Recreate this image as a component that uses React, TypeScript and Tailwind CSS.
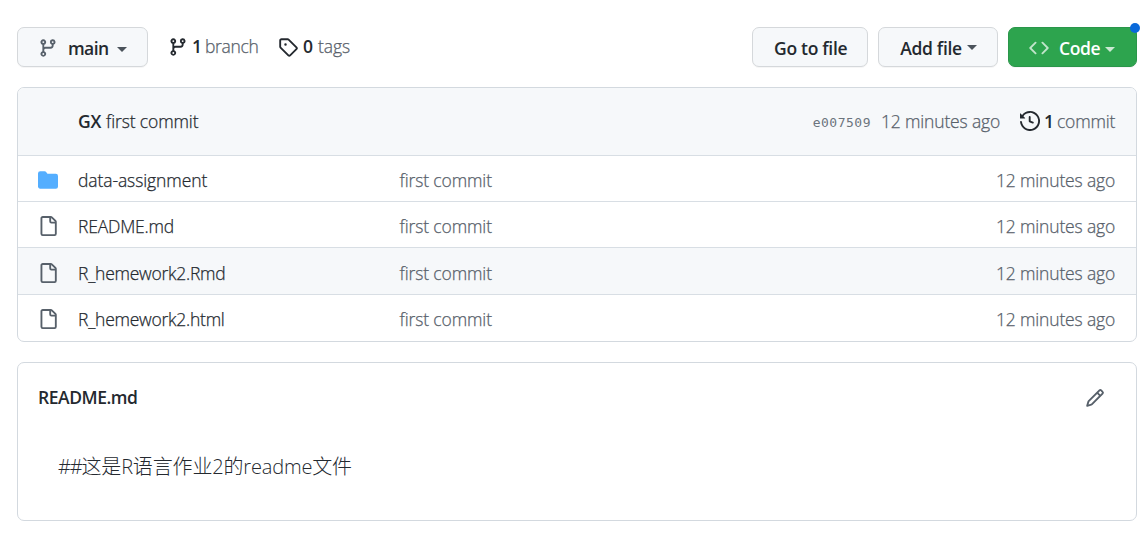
import type { ReactNode } from 'react';

const paths = {
  branch:
    'M11.75 2.5a.75.75 0 100 1.5.75.75 0 000-1.5zm-2.25.75a2.25 2.25 0 113 2.122V6A2.5 2.5 0 0110 8.5H6a1 1 0 00-1 1v1.128a2.251 2.251 0 11-1.5 0V5.372a2.25 2.25 0 111.5 0v1.836A2.492 2.492 0 016 7h4a1 1 0 001-1v-.628A2.25 2.25 0 019.5 3.25zM4.25 12a.75.75 0 100 1.5.75.75 0 000-1.5zM3.5 3.25a.75.75 0 111.5 0 .75.75 0 01-1.5 0z',
  tag: 'M2.5 7.775V2.75a.25.25 0 01.25-.25h5.025a.25.25 0 01.177.073l6.25 6.25a.25.25 0 010 .354l-5.025 5.025a.25.25 0 01-.354 0l-6.25-6.25a.25.25 0 01-.073-.177zm-1.5 0V2.75C1 1.784 1.784 1 2.75 1h5.025c.464 0 .91.184 1.238.513l6.25 6.25a1.75 1.75 0 010 2.474l-5.026 5.026a1.75 1.75 0 01-2.474 0l-6.25-6.25A1.75 1.75 0 011 7.775zM6 5a1 1 0 100 2 1 1 0 000-2z',
  code: 'M4.72 3.22a.75.75 0 011.06 1.06L2.06 8l3.72 3.72a.75.75 0 11-1.06 1.06L.47 8.53a.75.75 0 010-1.06l4.25-4.25zm6.56 0a.75.75 0 10-1.06 1.06L13.94 8l-3.72 3.72a.75.75 0 101.06 1.06l4.25-4.25a.75.75 0 000-1.06l-4.25-4.25z',
  history:
    'M1.643 3.143L.427 1.927A.25.25 0 000 2.104V5.75c0 .138.112.25.25.25h3.646a.25.25 0 00.177-.427L2.715 4.215a6.5 6.5 0 11-1.18 4.458.75.75 0 10-1.493.154 8.001 8.001 0 101.6-5.684zM7.75 4a.75.75 0 01.75.75v2.992l2.028.812a.75.75 0 01-.557 1.392l-2.5-1A.75.75 0 017 8.25v-3.5A.75.75 0 017.75 4z',
  folder:
    'M1.75 1A1.75 1.75 0 000 2.75v10.5C0 14.216.784 15 1.75 15h12.5A1.75 1.75 0 0016 13.25v-8.5A1.75 1.75 0 0014.25 3h-6.5a.25.25 0 01-.2-.1l-.9-1.2c-.33-.44-.85-.7-1.4-.7h-3.5z',
  file: 'M2 1.75C2 .784 2.784 0 3.75 0h6.586c.464 0 .909.184 1.237.513l2.914 2.914c.329.328.513.773.513 1.237v9.586A1.75 1.75 0 0113.25 16h-9.5A1.75 1.75 0 012 14.25V1.75zm1.75-.25a.25.25 0 00-.25.25v12.5c0 .138.112.25.25.25h9.5a.25.25 0 00.25-.25V6h-2.75A1.75 1.75 0 019 4.25V1.5H3.75zm6.75.062V4.25c0 .138.112.25.25.25h2.688a.252.252 0 00-.011-.013l-2.914-2.914a.272.272 0 00-.013-.011z',
  pencil:
    'M11.013 1.427a1.75 1.75 0 012.474 0l1.086 1.086a1.75 1.75 0 010 2.474l-8.61 8.61c-.21.21-.47.364-.756.445l-3.251.93a.75.75 0 01-.927-.928l.929-3.25a1.75 1.75 0 01.445-.758l8.61-8.61zm1.414 1.06a.25.25 0 00-.354 0L10.811 3.75l1.439 1.44 1.263-1.263a.25.25 0 000-.354l-1.086-1.086zM11.189 6.25L9.75 4.81l-6.286 6.287a.25.25 0 00-.064.108l-.558 1.953 1.953-.558a.249.249 0 00.108-.064l6.286-6.286z',
};

function Icon({ name, className = '' }: { name: keyof typeof paths; className?: string }) {
  return (
    <svg viewBox="0 0 16 16" fill="currentColor" className={`size-5 shrink-0 ${className}`}>
      <path fillRule="evenodd" d={paths[name]} />
    </svg>
  );
}

function Caret({ className = '' }: { className?: string }) {
  return (
    <svg viewBox="0 0 10 5" fill="currentColor" className={`h-[5px] w-[10px] shrink-0 ${className}`}>
      <path d="M0 0h10L5 5z" />
    </svg>
  );
}

function Button({ className, children }: { className: string; children: ReactNode }) {
  return (
    <button
      className={`flex h-10 items-center rounded-[7px] border font-semibold whitespace-nowrap shadow-[0_1px_0_rgba(27,31,36,0.04)] ${className}`}
    >
      {children}
    </button>
  );
}

/* Light text with a hairline stroke, for a weight between light and regular. */
function Text({ className = '', children }: { className?: string; children: ReactNode }) {
  return <span className={`font-light whitespace-nowrap [-webkit-text-stroke:0.25px] ${className}`}>{children}</span>;
}

const files: { name: string; icon: 'folder' | 'file'; row: string; track: string }[] = [
  { name: 'data-assignment', icon: 'folder', row: 'h-[45px] pt-[3px]', track: 'tracking-[-0.1px]' },
  { name: 'README.md', icon: 'file', row: 'h-[46px] border-t pt-[3px]', track: 'tracking-[-0.2px]' },
  { name: 'R_hemework2.Rmd', icon: 'file', row: 'h-[47px] border-t bg-[#f6f8fa] pt-1', track: 'tracking-[-0.25px]' },
  { name: 'R_hemework2.html', icon: 'file', row: 'h-[47px] border-t pt-0.5', track: 'tracking-[-0.25px]' },
];

export default function App() {
  return (
    <div className="h-[538px] w-[1147px] overflow-hidden bg-white pt-[27px] pr-[10px] pl-[17px] font-['Open_Sans','Noto_Sans_CJK_SC',sans-serif] text-[17.5px] leading-[26px] text-[#24292f]">
      <div className="flex h-10 items-center">
        <Button className="w-[131px] border-[#d5d8db] bg-[#f6f8fa] pl-5">
          <Icon name="branch" className="mt-0.5 text-[#57606a]" />
          <span className="ml-[10px] w-[39px] pt-0.5 tracking-[-0.6px]">main</span>
          <Caret className="mt-[5px] ml-[10px] text-[#4b535b]" />
        </Button>
        <div className="ml-5 flex items-center pb-0.5">
          <Icon name="branch" className="mt-0.5" />
          <span className="ml-1 font-semibold">1</span>
          <Text className="ml-[3px] w-[53px] tracking-[-0.35px] text-[#57606a]">branch</Text>
        </div>
        <div className="ml-5 flex items-center pb-0.5">
          <Icon name="tag" className="mt-0.5" />
          <span className="ml-[5px] font-semibold">0</span>
          <Text className="ml-[5px] tracking-[-0.1px] text-[#57606a]">tags</Text>
        </div>
        <div className="ml-auto flex gap-[10px]">
          <Button className="w-[116px] border-[#d5d8db] bg-[#f6f8fa] pt-0.5 pl-[21px]">
            <span className="tracking-[-0.3px]">Go to file</span>
          </Button>
          <Button className="w-[120px] border-[#d5d8db] bg-[#f6f8fa] pl-[21px]">
            <span className="w-[62px] pt-0.5 tracking-[-0.3px]">Add file</span>
            <Caret className="ml-[5px] text-[#4b535b]" />
          </Button>
          <Button className="relative w-[129px] border-[#2a964a] bg-[#2da44e] pl-5 text-white">
            <Icon name="code" className="mt-0.5 text-[#c0e4ca]" />
            <span className="ml-[10px] w-[41px] pt-0.5 tracking-[-0.35px]">Code</span>
            <Caret className="mt-[5px] ml-[5px] text-[#cbe9d3]" />
            <span className="absolute -top-[5px] -right-1 size-[10px] rounded-full bg-[#0969da]" />
          </Button>
        </div>
      </div>

      <div className="mt-5 overflow-hidden rounded-[7px] border border-[#d3d9df]">
        <div className="flex h-[68px] items-center border-b border-[#d8dee4] bg-[#f6f8fa] pr-[21px] pb-px pl-[60px]">
          <span className="font-semibold tracking-[-0.3px]">GX</span>
          <Text className="ml-[5px] tracking-[-0.12px]">first commit</Text>
          <span className="ml-auto pt-[3px] font-['DejaVu_Sans_Mono',monospace] text-[13px] tracking-[0.5px] text-[#6c747d]">
            e007509
          </span>
          <Text className="ml-[10px] w-[119px] tracking-[-0.17px] text-[#57606a]">12 minutes ago</Text>
          <Icon name="history" className="ml-5" />
          <span className="ml-1 font-semibold">1</span>
          <Text className="ml-[3px] w-[58px] tracking-[-0.2px] text-[#57606a]">commit</Text>
        </div>
        {files.map((f) => (
          <div key={f.name} className={`flex items-center border-[#d8dee4] pr-[21px] pl-5 ${f.row}`}>
            <Icon name={f.icon} className={f.icon === 'folder' ? 'text-[#54aeff]' : 'text-[#57606a]'} />
            <Text className={`ml-5 w-[321.5px] pb-px ${f.track}`}>{f.name}</Text>
            <Text className="pb-px tracking-[-0.12px] text-[#57606a]">first commit</Text>
            <Text className="ml-auto w-[119px] pb-px tracking-[-0.17px] text-[#57606a]">12 minutes ago</Text>
          </div>
        ))}
      </div>

      <div className="mt-5 h-[159px] rounded-[7px] border border-[#d3d9df]">
        <div className="flex h-[69px] items-center justify-between pr-[31px] pl-5">
          <h2 className="pb-0.5 font-semibold tracking-[-0.45px]">README.md</h2>
          <Icon name="pencil" className="text-[#57606a]" />
        </div>
        <p className="pt-5 pl-10 text-[20px] leading-[30px] font-light">
          <span className="tracking-[-1.2px]">##</span>
          <span className="tracking-[-0.16px]">这是R语言作业2的readme文件</span>
        </p>
      </div>
    </div>
  );
}
